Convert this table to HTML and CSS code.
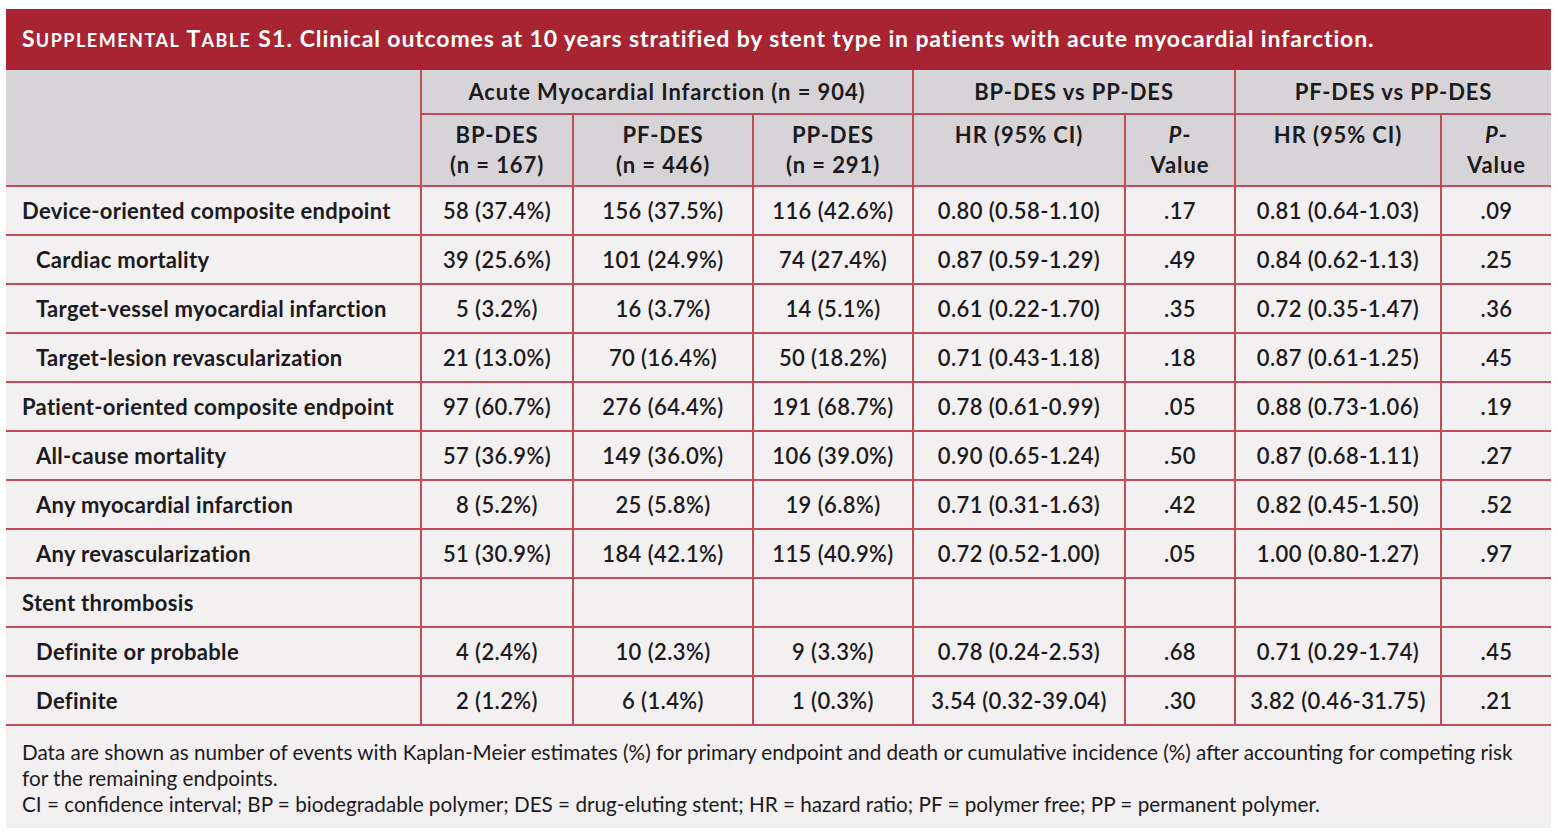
FILE: index.html
```
<!DOCTYPE html>
<html lang="en">
<head>
<meta charset="utf-8">
<title>Supplemental Table S1</title>
<link rel="stylesheet" href="styles.css">
</head>
<body>
<div class="card">
  <div class="caption"><span class="sc">S<span class="scs">upplemental</span> T<span class="scs">able</span> S1.</span> Clinical outcomes at 10 years stratified by stent type in patients with acute myocardial infarction.</div>
  <table class="tbl">
    <colgroup>
      <col class="c-label"><col class="c-bp"><col class="c-pf"><col class="c-pp"><col class="c-hr1"><col class="c-p1"><col class="c-hr2"><col class="c-p2">
    </colgroup>
    <thead>
      <tr class="h1">
        <th rowspan="2" class="blank"></th>
        <th colspan="3">Acute Myocardial Infarction (n = 904)</th>
        <th colspan="2">BP-DES vs PP-DES</th>
        <th colspan="2">PF-DES vs PP-DES</th>
      </tr>
      <tr class="h2">
        <th>BP-DES<br>(n = 167)</th>
        <th>PF-DES<br>(n = 446)</th>
        <th>PP-DES<br>(n = 291)</th>
        <th>HR (95% CI)</th>
        <th><i>P</i>-<br>Value</th>
        <th>HR (95% CI)</th>
        <th><i>P</i>-<br>Value</th>
      </tr>
    </thead>
    <tbody>
      <tr><td class="lbl">Device-oriented composite endpoint</td><td>58 (37.4%)</td><td>156 (37.5%)</td><td>116 (42.6%)</td><td>0.80 (0.58-1.10)</td><td>.17</td><td>0.81 (0.64-1.03)</td><td>.09</td></tr>
      <tr><td class="lbl sub">Cardiac mortality</td><td>39 (25.6%)</td><td>101 (24.9%)</td><td>74 (27.4%)</td><td>0.87 (0.59-1.29)</td><td>.49</td><td>0.84 (0.62-1.13)</td><td>.25</td></tr>
      <tr><td class="lbl sub">Target-vessel myocardial infarction</td><td>5 (3.2%)</td><td>16 (3.7%)</td><td>14 (5.1%)</td><td>0.61 (0.22-1.70)</td><td>.35</td><td>0.72 (0.35-1.47)</td><td>.36</td></tr>
      <tr><td class="lbl sub">Target-lesion revascularization</td><td>21 (13.0%)</td><td>70 (16.4%)</td><td>50 (18.2%)</td><td>0.71 (0.43-1.18)</td><td>.18</td><td>0.87 (0.61-1.25)</td><td>.45</td></tr>
      <tr><td class="lbl">Patient-oriented composite endpoint</td><td>97 (60.7%)</td><td>276 (64.4%)</td><td>191 (68.7%)</td><td>0.78 (0.61-0.99)</td><td>.05</td><td>0.88 (0.73-1.06)</td><td>.19</td></tr>
      <tr><td class="lbl sub">All-cause mortality</td><td>57 (36.9%)</td><td>149 (36.0%)</td><td>106 (39.0%)</td><td>0.90 (0.65-1.24)</td><td>.50</td><td>0.87 (0.68-1.11)</td><td>.27</td></tr>
      <tr><td class="lbl sub">Any myocardial infarction</td><td>8 (5.2%)</td><td>25 (5.8%)</td><td>19 (6.8%)</td><td>0.71 (0.31-1.63)</td><td>.42</td><td>0.82 (0.45-1.50)</td><td>.52</td></tr>
      <tr><td class="lbl sub">Any revascularization</td><td>51 (30.9%)</td><td>184 (42.1%)</td><td>115 (40.9%)</td><td>0.72 (0.52-1.00)</td><td>.05</td><td>1.00 (0.80-1.27)</td><td>.97</td></tr>
      <tr><td class="lbl">Stent thrombosis</td><td></td><td></td><td></td><td></td><td></td><td></td><td></td></tr>
      <tr><td class="lbl sub">Definite or probable</td><td>4 (2.4%)</td><td>10 (2.3%)</td><td>9 (3.3%)</td><td>0.78 (0.24-2.53)</td><td>.68</td><td>0.71 (0.29-1.74)</td><td>.45</td></tr>
      <tr><td class="lbl sub">Definite</td><td>2 (1.2%)</td><td>6 (1.4%)</td><td>1 (0.3%)</td><td>3.54 (0.32-39.04)</td><td>.30</td><td>3.82 (0.46-31.75)</td><td>.21</td></tr>
    </tbody>
  </table>
  <div class="notes">
    <p>Data are shown as number of events with Kaplan-Meier estimates (%) for primary endpoint and death or cumulative incidence (%) after accounting for competing risk for the remaining endpoints.</p>
    <p>CI = confidence interval; BP = biodegradable polymer; DES = drug-eluting stent; HR = hazard ratio; PF = polymer free; PP = permanent polymer.</p>
  </div>
</div>
</body>
</html>
```

FILE: styles.css
```
html, body {
  margin: 0;
  padding: 0;
  background: #ffffff;
}
body {
  font-family: Lato, "Noto Sans", sans-serif;
  color: #1c1a1c;
}
.card {
  margin: 9px 0 0 6px;
  width: 1545px;
  background: #f2f0f1;
}
.caption {
  background: #a82432;
  color: #ffffff;
  font-weight: 700;
  font-size: 23px;
  letter-spacing: 0.88px;
  height: 61px;
  box-sizing: border-box;
  padding: 16px 0 0 16px;
  line-height: 26px;
  white-space: nowrap;
}
.sc {
  letter-spacing: 1.2px;
}
.scs {
  text-transform: uppercase;
  font-size: 18px;
  letter-spacing: 1.5px;
}
.tbl {
  width: 1545px;
  table-layout: fixed;
  border-collapse: collapse;
  font-size: 22px;
}
.c-label { width: 415px; }
.c-bp { width: 152px; }
.c-pf { width: 180px; }
.c-pp { width: 160px; }
.c-hr1 { width: 212px; }
.c-p1 { width: 110px; }
.c-hr2 { width: 206px; }
.c-p2 { width: 110px; }
.tbl th, .tbl td {
  border: 2px solid #c24b59;
  padding: 0;
  text-align: center;
}
.tbl tr > :first-child { border-left: none; }
.tbl tr > :last-child { border-right: none; }
.tbl thead tr.h1 > th { border-top: none; }
.tbl thead th {
  background: #d6d4d7;
  font-weight: 700;
  line-height: 30px;
  vertical-align: top;
  letter-spacing: 0.9px;
}
.tbl tr.h1 th {
  height: 44px;
  padding-top: 7px;
  box-sizing: border-box;
}
.tbl tr.h2 th {
  height: 72px;
  padding-top: 5px;
  box-sizing: border-box;
}
.tbl tbody td {
  height: 49px;
  box-sizing: border-box;
  font-weight: 600;
  letter-spacing: 0.4px;
  line-height: 26px;
  padding-top: 1px;
}
.tbl td.lbl {
  text-align: left;
  font-weight: 700;
  letter-spacing: 0.3px;
  padding-left: 16px;
}
.tbl td.lbl.sub {
  padding-left: 30px;
}
.notes {
  padding: 13px 36px 11px 16px;
  font-size: 20.7px;
  line-height: 26px;
}
.notes p {
  margin: 0;
}
```
